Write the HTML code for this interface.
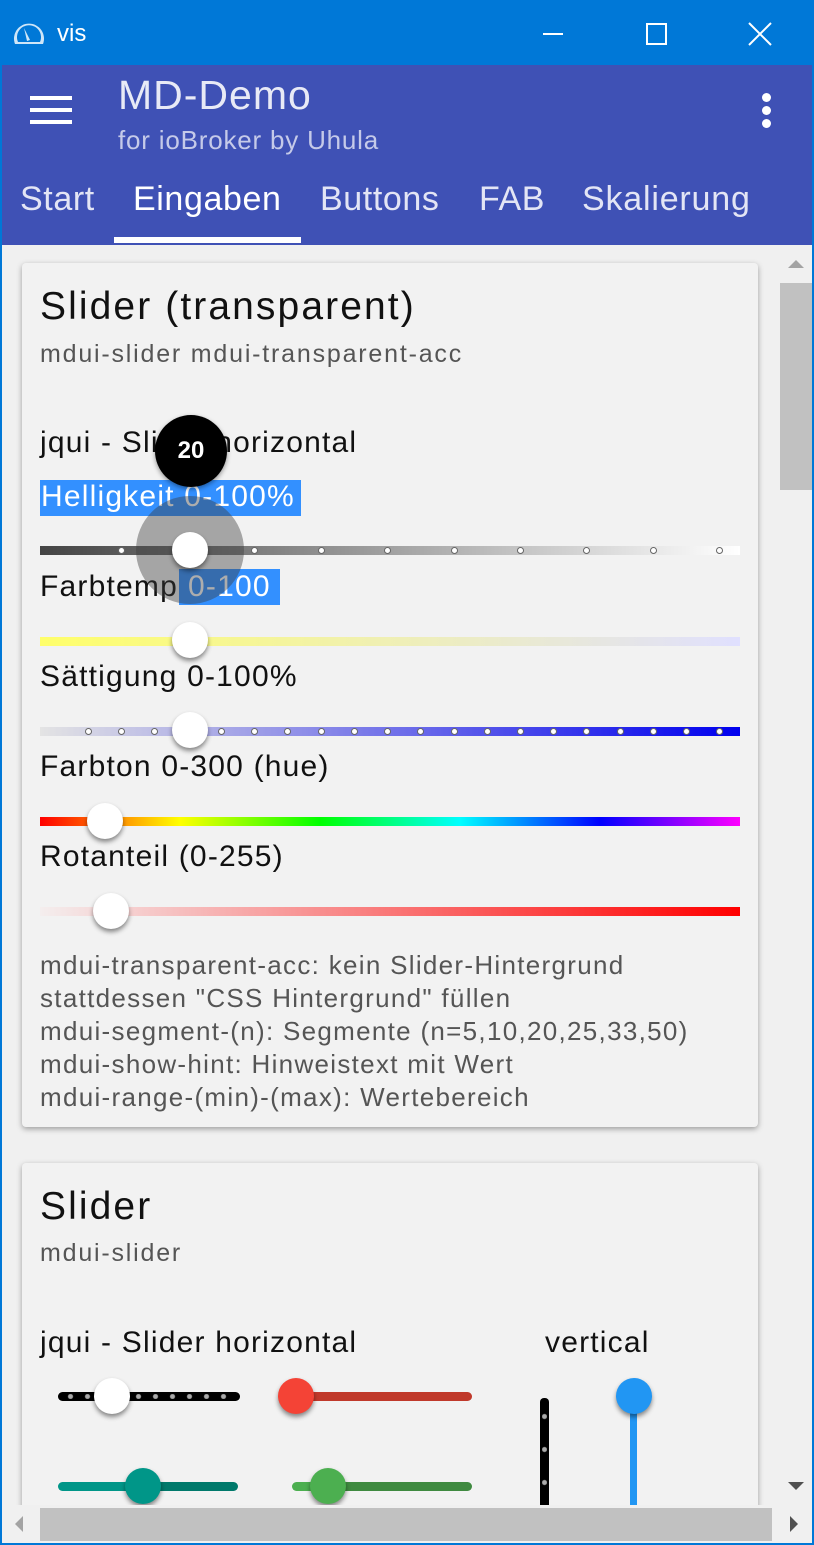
<!DOCTYPE html>
<html><head><meta charset="utf-8"><style>
*{margin:0;padding:0;box-sizing:border-box}
html,body{width:814px;height:1545px;overflow:hidden}
body{position:relative;background:#0078d7;font-family:"Liberation Sans",Arial,sans-serif}
.a{position:absolute}
.t{position:absolute;white-space:nowrap;color:#111}
.track{position:absolute;left:40px;width:700px;height:9px}
.dot{position:absolute;width:7px;height:7px;border-radius:50%;background:#fff;border:1px solid #666;top:1px}
.th{position:absolute;width:36px;height:36px;border-radius:50%;background:#fff;box-shadow:0 3px 5px rgba(0,0,0,.45)}
.c{font-size:30px;letter-spacing:1.2px}
</style></head><body>
<div class="a" style="left:0;top:0;width:814px;height:65px;background:#0078d7"></div>
<svg class="a" style="left:12px;top:18px" width="34" height="30" viewBox="0 0 34 30"><path d="M3 26 A15 15 0 1 1 31 26 Z" fill="#cfe6f8"/><path d="M6 24 A12 12 0 1 1 28 24 Z" fill="#0078d7"/><path d="M12 10 L18 22 L15 23 Z" fill="#cfe6f8"/></svg>
<div class="t" style="left:57px;top:20px;font-size:24px;color:#fff">vis</div>
<div class="a" style="left:543px;top:33px;width:20px;height:2px;background:#fff"></div>
<div class="a" style="left:646px;top:23px;width:21px;height:22px;border:2px solid #fff"></div>
<svg class="a" style="left:748px;top:22px" width="24" height="24"><path d="M1 1L23 23M23 1L1 23" stroke="#fff" stroke-width="2"/></svg>
<div class="a" style="left:2px;top:65px;width:810px;height:180px;background:#3f51b5"></div>
<div class="a" style="left:30px;top:96px;width:42px;height:4px;background:#fff"></div>
<div class="a" style="left:30px;top:108px;width:42px;height:4px;background:#fff"></div>
<div class="a" style="left:30px;top:120px;width:42px;height:4px;background:#fff"></div>
<div class="t" style="left:118px;top:72px;font-size:41px;letter-spacing:1px;color:#e8eaf6">MD-Demo</div>
<div class="t" style="left:118px;top:125px;font-size:26px;letter-spacing:0.8px;color:#c5cae9">for ioBroker by Uhula</div>
<div class="a" style="left:762px;top:93px;width:9px;height:9px;border-radius:50%;background:#fff"></div>
<div class="a" style="left:762px;top:106px;width:9px;height:9px;border-radius:50%;background:#fff"></div>
<div class="a" style="left:762px;top:119px;width:9px;height:9px;border-radius:50%;background:#fff"></div>
<div class="t" style="left:20px;top:180px;font-size:34px;letter-spacing:0.6px;color:#e3e5f5">Start</div>
<div class="t" style="left:133px;top:180px;font-size:34px;letter-spacing:0.6px;color:#fff">Eingaben</div>
<div class="t" style="left:320px;top:180px;font-size:34px;letter-spacing:0.6px;color:#e3e5f5">Buttons</div>
<div class="t" style="left:479px;top:180px;font-size:34px;letter-spacing:0.6px;color:#e3e5f5">FAB</div>
<div class="t" style="left:582px;top:180px;font-size:34px;letter-spacing:0.8px;color:#e3e5f5">Skalierung</div>
<div class="a" style="left:114px;top:237px;width:187px;height:6px;background:#fff"></div>
<div class="a" style="left:2px;top:245px;width:810px;height:1298px;background:#f0f0f0;overflow:hidden">
<div class="a" style="left:20px;top:18px;width:736px;height:864px;background:#f2f2f2;border-radius:4px;box-shadow:0 2px 6px rgba(0,0,0,.35)"></div>
<div class="a" style="left:20px;top:918px;width:736px;height:400px;background:#f2f2f2;border-radius:4px;box-shadow:0 2px 6px rgba(0,0,0,.35)"></div>
</div>
<div class="t" style="left:40px;top:285px;font-size:39px;letter-spacing:2.1px">Slider (transparent)</div>
<div class="t" style="left:40px;top:340px;font-size:25px;letter-spacing:1.8px;color:#555">mdui-slider mdui-transparent-acc</div>
<div class="t c" style="left:40px;top:426px">jqui - Slider horizontal</div>
<div class="a" style="left:40px;top:480px;width:261px;height:36px;background:#3390ff"></div>
<div class="t c" style="left:41px;top:480px;color:#fff">Helligkeit 0-100%</div>
<div class="track" style="top:546px;background:linear-gradient(90deg,#444,#fff)">
<div class="dot" style="left:78px"></div><div class="dot" style="left:211px"></div><div class="dot" style="left:278px"></div><div class="dot" style="left:344px"></div><div class="dot" style="left:411px"></div><div class="dot" style="left:477px"></div><div class="dot" style="left:543px"></div><div class="dot" style="left:610px"></div><div class="dot" style="left:676px"></div></div>
<div class="a" style="left:179px;top:569px;width:101px;height:36px;background:#3390ff"></div>
<div class="t c" style="left:40px;top:570px">Farbtemp</div>
<div class="t c" style="left:188px;top:570px;color:#fff">0-100</div>
<div class="a" style="left:136px;top:496px;width:108px;height:108px;border-radius:50%;background:rgba(60,60,60,.42)"></div>
<div class="th" style="left:172px;top:532px"></div>
<div class="a" style="left:155px;top:415px;width:72px;height:72px;border-radius:50%;background:#000;box-shadow:0 2px 5px rgba(0,0,0,.4)"></div>
<div class="t" style="left:155px;top:437px;width:72px;text-align:center;font-size:24px;font-weight:bold;color:#fff">20</div>
<div class="track" style="top:637px;background:linear-gradient(90deg,#ffff6a,#e0e0ff)"></div>
<div class="th" style="left:172px;top:622px"></div>
<div class="t c" style="left:40px;top:660px">Sättigung 0-100%</div>
<div class="track" style="top:727px;background:linear-gradient(90deg,#e4e4e4,#0000ee)">
<div class="dot" style="left:45px"></div><div class="dot" style="left:78px"></div><div class="dot" style="left:111px"></div><div class="dot" style="left:178px"></div><div class="dot" style="left:211px"></div><div class="dot" style="left:244px"></div><div class="dot" style="left:278px"></div><div class="dot" style="left:311px"></div><div class="dot" style="left:344px"></div><div class="dot" style="left:377px"></div><div class="dot" style="left:411px"></div><div class="dot" style="left:444px"></div><div class="dot" style="left:477px"></div><div class="dot" style="left:510px"></div><div class="dot" style="left:543px"></div><div class="dot" style="left:577px"></div><div class="dot" style="left:610px"></div><div class="dot" style="left:643px"></div><div class="dot" style="left:676px"></div></div>
<div class="th" style="left:172px;top:712px"></div>
<div class="t c" style="left:40px;top:750px">Farbton 0-300 (hue)</div>
<div class="track" style="top:817px;background:linear-gradient(90deg,#f00,#ff0 20%,#0f0 40%,#0ff 60%,#00f 80%,#f0f)"></div>
<div class="th" style="left:87px;top:803px"></div>
<div class="t c" style="left:40px;top:840px">Rotanteil (0-255)</div>
<div class="track" style="top:907px;background:linear-gradient(90deg,#f4eeee,#f00)"></div>
<div class="th" style="left:93px;top:893px"></div>
<div class="t" style="left:40px;top:949px;font-size:26px;letter-spacing:1.3px;color:#555;line-height:33px">mdui-transparent-acc: kein Slider-Hintergrund<br>stattdessen "CSS Hintergrund" füllen<br>mdui-segment-(n): Segmente (n=5,10,20,25,33,50)<br>mdui-show-hint: Hinweistext mit Wert<br>mdui-range-(min)-(max): Wertebereich</div>
<div class="t" style="left:40px;top:1185px;font-size:39px;letter-spacing:2.1px">Slider</div>
<div class="t" style="left:40px;top:1239px;font-size:25px;letter-spacing:1.8px;color:#555">mdui-slider</div>
<div class="t c" style="left:40px;top:1326px">jqui - Slider horizontal</div>
<div class="t c" style="left:545px;top:1326px">vertical</div>
<div class="a" style="left:58px;top:1392px;width:182px;height:9px;border-radius:5px;background:#000"></div>
<div class="a" style="left:62px;top:1394px;width:174px;height:5px;background:radial-gradient(circle,#aaa 2px,transparent 3px) 0 0/17px 5px"></div>
<div class="a" style="left:94px;top:1378px;width:36px;height:36px;border-radius:50%;background:#fff;box-shadow:0 3px 5px rgba(0,0,0,.45)"></div>
<div class="a" style="left:280px;top:1392px;width:192px;height:9px;border-radius:5px;background:#c0392b"></div>
<div class="a" style="left:278px;top:1378px;width:36px;height:36px;border-radius:50%;background:#f44336;box-shadow:0 3px 5px rgba(0,0,0,.45)"></div>
<div class="a" style="left:58px;top:1482px;width:180px;height:9px;border-radius:5px;background:linear-gradient(90deg,#009688 50%,#00796b 50%)"></div>
<div class="a" style="left:125px;top:1468px;width:36px;height:36px;border-radius:50%;background:#009688;box-shadow:0 3px 5px rgba(0,0,0,.45)"></div>
<div class="a" style="left:292px;top:1482px;width:180px;height:9px;border-radius:5px;background:linear-gradient(90deg,#4caf50 20%,#3f8a40 20%)"></div>
<div class="a" style="left:310px;top:1468px;width:36px;height:36px;border-radius:50%;background:#4caf50;box-shadow:0 3px 5px rgba(0,0,0,.45)"></div>
<div class="a" style="left:540px;top:1398px;width:9px;height:107px;border-radius:4px 4px 0 0;background:#000"></div>
<div class="a" style="left:542px;top:1400px;width:5px;height:105px;background:radial-gradient(circle,#aaa 2px,transparent 3px) 0 0/5px 33px"></div>
<div class="a" style="left:630px;top:1400px;width:7px;height:105px;background:#2196f3"></div>
<div class="a" style="left:616px;top:1378px;width:36px;height:36px;border-radius:50%;background:#2196f3;box-shadow:0 3px 5px rgba(0,0,0,.45)"></div>
<div class="a" style="left:780px;top:245px;width:32px;height:1260px;background:#f0f0f0"></div>
<div class="a" style="left:780px;top:283px;width:32px;height:207px;background:#c1c1c1"></div>
<svg class="a" style="left:787px;top:259px" width="18" height="10"><path d="M1 9L9 1L17 9Z" fill="#a3a3a3"/></svg>
<svg class="a" style="left:787px;top:1481px" width="18" height="10"><path d="M1 1L9 9L17 1Z" fill="#505050"/></svg>
<div class="a" style="left:2px;top:1505px;width:810px;height:38px;background:#f0f0f0"></div>
<div class="a" style="left:40px;top:1508px;width:732px;height:33px;background:#c1c1c1"></div>
<svg class="a" style="left:14px;top:1515px" width="10" height="18"><path d="M9 1L1 9L9 17Z" fill="#a3a3a3"/></svg>
<svg class="a" style="left:789px;top:1515px" width="10" height="18"><path d="M1 1L9 9L1 17Z" fill="#505050"/></svg>
</body></html>
